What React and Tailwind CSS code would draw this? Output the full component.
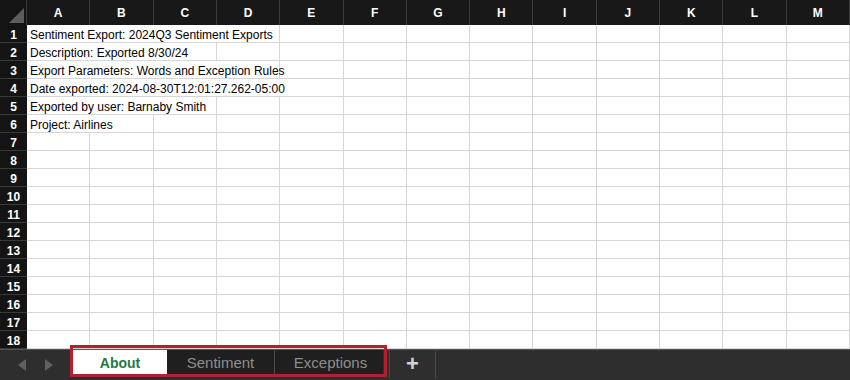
import React from "react";

const COLS = ["A", "B", "C", "D", "E", "F", "G", "H", "I", "J", "K", "L", "M"];
const SPAN = {
  1: "col-span-1",
  2: "col-span-2",
  3: "col-span-3",
  4: "col-span-4",
  5: "col-span-5",
};

const ROWS = [
  { t: "Sentiment Export: 2024Q3 Sentiment Exports", s: 4 },
  { t: "Description: Exported 8/30/24", s: 3 },
  { t: "Export Parameters: Words and Exception Rules", s: 4 },
  { t: "Date exported: 2024-08-30T12:01:27.262-05:00", s: 5 },
  { t: "Exported by user: Barnaby Smith", s: 3 },
  { t: "Project: Airlines", s: 2 },
];
for (let i = 7; i <= 18; i++) ROWS.push({ t: "", s: 1 });

export default function App() {
  return (
    <div
      className="relative w-[850px] h-[380px] overflow-hidden bg-white"
      style={{ fontFamily: '"Liberation Sans", Arial, sans-serif' }}
    >
      <div className="grid grid-cols-[27px_repeat(13,minmax(0,1fr))]">
        {/* header */}
        <div className="relative h-[25px] bg-[#141414] border-r border-[#3a3a3a]">
          <svg className="absolute left-[9px] top-[8px]" width="15" height="15" viewBox="0 0 15 15">
            <polygon points="15,0 15,15 0,15" fill="#5c5c5c" />
          </svg>
        </div>
        {COLS.map((c) => (
          <div
            key={c}
            className="h-[25px] bg-[#181818] border-r border-[#3a3a3a] flex items-center justify-center text-white font-bold text-[12px]"
          >
            {c}
          </div>
        ))}
        {ROWS.map((r, i) => (
          <React.Fragment key={i}>
            <div className="h-[18px] bg-[#141414] border-b border-[#3a3a3a] flex items-center justify-center pt-[2px] text-white font-bold text-[12px]">
              {i + 1}
            </div>
            <div
              className={`${SPAN[r.s]} h-[18px] border-r border-b border-[#d6d6d6] flex items-center pl-[3px] pt-[2px] text-[12px] text-black whitespace-nowrap overflow-visible`}
            >
              {r.t}
            </div>
            {Array.from({ length: 13 - r.s }).map((_, j) => (
              <div key={j} className="h-[18px] border-r border-b border-[#d6d6d6]" />
            ))}
          </React.Fragment>
        ))}
      </div>

      {/* tab bar */}
      <div className="flex h-[31px] bg-[#2e2e2e] border-t border-[#555]">
        <div className="w-[73px] flex items-center">
          <svg className="ml-[18px]" width="8" height="12" viewBox="0 0 8 12">
            <polygon points="8,0 8,12 0,6" fill="#606060" />
          </svg>
          <svg className="ml-[19px]" width="8" height="12" viewBox="0 0 8 12">
            <polygon points="0,0 0,12 8,6" fill="#606060" />
          </svg>
        </div>
        <div className="flex h-[27px]">
          <div className="w-[94px] bg-white flex items-center justify-center text-[14px] font-bold text-[#1f7a44]">
            About
          </div>
          <div className="w-[108px] bg-[#1f1f1f] border-r border-[#4a4a4a] flex items-center justify-center text-[15px] text-[#8e8e8e]">
            Sentiment
          </div>
          <div className="w-[108px] bg-[#1f1f1f] flex items-center justify-center pl-[3px] text-[15px] text-[#8e8e8e]">
            Exceptions
          </div>
        </div>
        <div className="ml-[6px] w-px h-[28px] bg-[#4a4a4a]" />
        <div className="w-[45px] flex items-center justify-center text-[22px] leading-none font-bold text-[#d0d0d0] pb-[2px]">
          +
        </div>
        <div className="w-px h-[28px] mt-[1px] bg-[#4a4a4a]" />
      </div>

      {/* annotation box */}
      <div className="absolute left-[70px] top-[345px] w-[317px] h-[32px] border-[3px] border-[#b3202e]" />
    </div>
  );
}
